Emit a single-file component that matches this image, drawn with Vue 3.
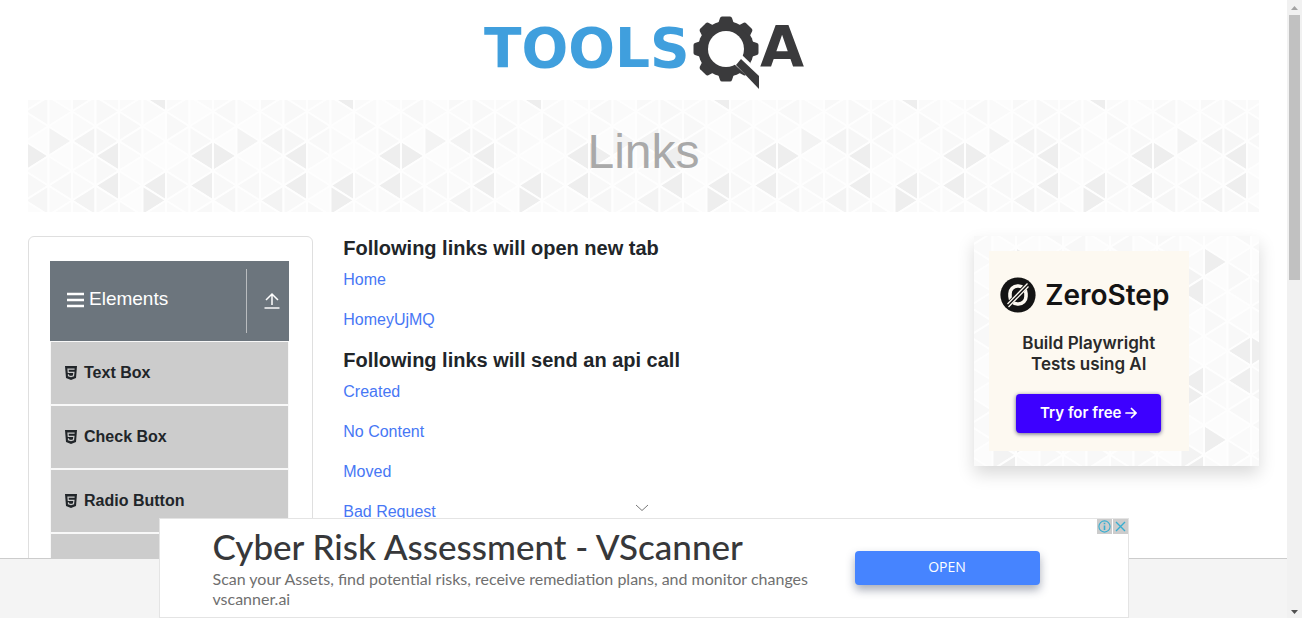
<script setup>
const tabLinks = ['Home', 'HomeyUjMQ']
const apiLinks = ['Created', 'No Content', 'Moved', 'Bad Request']
const menuItems = ['Text Box', 'Check Box', 'Radio Button']
const teeth = [0, 45, 90, 135, 180, 225, 270, 315]

const shades = ['#fcfcfc', '#fafafa', '#f8f8f8', '#f6f6f6', '#f3f3f3', '#eeeeee']
const strips = [
  '011210512302',
  '120104012110',
  '012114111412',
  '021213525210',
  '101122101021',
  '145101015510',
  '501121012110',
  '121012515120'
]
const tileWidth = 188
const tileHeight = 178
const stepX = tileWidth / 8
const stepY = tileHeight / 12
const triangles = []
strips.forEach((strip, c) => {
  for (let j = 0; j <= 12; j++) {
    const pointsRight = (j + c) % 2 === 0
    const base = pointsRight ? c * stepX : (c + 1) * stepX
    const apex = pointsRight ? (c + 1) * stepX : c * stepX
    const y = j * stepY
    triangles.push({
      key: c + '-' + j,
      points: `${base},${y - stepY} ${base},${y + stepY} ${apex},${y}`,
      fill: shades[Number(strip[j % 12])]
    })
  }
})
const patterns = {
  banner: { x: -3, y: -33 },
  promo: { x: 89, y: 26 }
}
</script>

<template>
  <div class="page">
    <div class="view">
      <header class="top">
        <a href="#" class="brand" aria-label="ToolsQA">
          <svg viewBox="-1 0 350 100" width="350" height="100">
            <text class="word blue" x="14" y="67">TOOLS</text>
            <g fill="#3a3a3c">
              <circle cx="256" cy="49" r="28" />
              <path
                v-for="a in teeth"
                :key="a"
                d="M248 24L250 18Q250.500 16.500 252 16.500H260Q261.500 16.500 262 18L264 24Z"
                :transform="`rotate(${a} 256 49)`"
              />
            </g>
            <circle cx="256" cy="49" r="18" fill="#fff" />
            <path d="M263 63L272 55L294 76V92Z" fill="#fff" />
            <path d="M266 65L271 59L289 76V89Z" fill="#3a3a3c" />
            <text class="word dark" x="290" y="67">A</text>
          </svg>
        </a>
      </header>

      <div class="banner">
        <svg class="texture" aria-hidden="true">
          <defs>
            <pattern
              id="banner-tile"
              patternUnits="userSpaceOnUse"
              :x="patterns.banner.x"
              :y="patterns.banner.y"
              :width="tileWidth"
              :height="tileHeight"
            >
              <polygon v-for="t in triangles" :key="t.key" :points="t.points" :fill="t.fill" stroke="#fefefe" stroke-width="2" />
            </pattern>
          </defs>
          <rect width="100%" height="100%" fill="url(#banner-tile)" />
        </svg>
        <h1>Links</h1>
      </div>

      <div class="columns">
        <nav class="menu">
          <button type="button" class="group">
            <span class="group-name">
              <svg viewBox="0 0 17 16" width="17" height="16"><path d="M0 2H17M0 8H17M0 14H17" stroke="#fff" stroke-width="2.6" /></svg>
              Elements
            </span>
            <span class="group-arrow">
              <svg viewBox="0 0 16 18" width="16" height="18" fill="none" stroke="#fff">
                <path d="M8 13V2M2 8L8 2L14 8" stroke-width="1.5" />
                <path d="M0.500 16H15.500" stroke-width="1.800" stroke="#e2e4e6" />
              </svg>
            </span>
          </button>
          <ul>
            <li v-for="item in menuItems" :key="item">
              <a href="#">
                <svg viewBox="0 0 12 14" width="12" height="14">
                  <path d="M0 0H12L11 12L6 14L1 12Z" fill="#212529" />
                  <path d="M9.6 3.2H3L3.3 6.3H8.9L8.5 9.8L6 10.6L3.5 9.8L3.4 8.4" fill="none" stroke="#ccc" stroke-width="1.2" />
                </svg>
                {{ item }}
              </a>
            </li>
            <li class="filler"></li>
          </ul>
        </nav>

        <main class="content">
          <h5>Following links will open new tab</h5>
          <p v-for="l in tabLinks" :key="l"><a href="#">{{ l }}</a></p>
          <h5>Following links will send an api call</h5>
          <p v-for="l in apiLinks" :key="l"><a href="#">{{ l }}</a></p>
        </main>

        <aside class="promo">
          <svg class="texture" aria-hidden="true">
            <defs>
              <pattern
                id="promo-tile"
                patternUnits="userSpaceOnUse"
                :x="patterns.promo.x"
                :y="patterns.promo.y"
                :width="tileWidth"
                :height="tileHeight"
              >
                <polygon v-for="t in triangles" :key="t.key" :points="t.points" :fill="t.fill" stroke="#fefefe" stroke-width="2" />
              </pattern>
            </defs>
            <rect width="100%" height="100%" fill="url(#promo-tile)" />
          </svg>
          <div class="zero">
            <div class="zero-brand">
              <svg viewBox="0 0 36 36" width="36" height="36">
                <circle cx="18" cy="18" r="17.6" fill="#141414" />
                <rect x="10" y="9" width="16" height="18" rx="7.5" fill="none" stroke="#fdf9f1" stroke-width="3.6" />
                <path d="M8 28L28 7" stroke="#141414" stroke-width="5" />
                <path d="M8.5 30L28.5 9.5M7.5 27L27.5 6.5" stroke="#fdf9f1" stroke-width="1.3" />
              </svg>
              <span>ZeroStep</span>
            </div>
            <p>Build Playwright<br />Tests using AI</p>
            <button type="button">
              Try for free
              <svg viewBox="0 0 12 12" width="12" height="12"><path d="M1 6H11M6.5 1.5L11 6L6.5 10.5" fill="none" stroke="#fff" stroke-width="1.7" stroke-linecap="round" /></svg>
            </button>
          </div>
        </aside>
      </div>
    </div>

    <footer class="foot"></footer>

    <section class="ad">
      <button type="button" class="collapse" aria-label="Collapse">
        <svg viewBox="0 0 14 8" width="14" height="8"><path d="M1 1L7 6.5L13 1" fill="none" stroke="#777" stroke-width="1" /></svg>
      </button>
      <div class="ad-copy">
        <h2>Cyber Risk Assessment - VScanner</h2>
        <p>Scan your Assets, find potential risks, receive remediation plans, and monitor changes<br />vscanner.ai</p>
      </div>
      <a href="#" class="open">OPEN</a>
      <div class="ad-tools">
        <button type="button" aria-label="Ad information">
          <svg viewBox="0 0 15 15" width="15" height="15"><circle cx="7.5" cy="7.5" r="5.6" fill="none" stroke="#38aed0" stroke-width="1.1" /><path d="M7.5 6.4V11M7.5 3.8V5.3" stroke="#38aed0" stroke-width="1.6" /></svg>
        </button>
        <button type="button" aria-label="Close ad">
          <svg viewBox="0 0 15 15" width="15" height="15"><path d="M3 3L12 12M12 3L3 12" stroke="#38aed0" stroke-width="1.4" /></svg>
        </button>
      </div>
    </section>

    <div class="scroll" aria-hidden="true">
      <svg viewBox="0 0 15 15" width="15" height="15"><path d="M4 10L7.5 6L11 10Z" fill="#a3a3a3" /></svg>
      <div class="track"><div class="thumb"></div></div>
      <svg viewBox="0 0 15 15" width="15" height="15"><path d="M4 7L7.5 11L11 7Z" fill="#505050" /></svg>
    </div>
  </div>
</template>

<style>
body {
  overflow: hidden;
}
</style>

<style scoped>
* {
  box-sizing: border-box;
}
button {
  border: 0;
  padding: 0;
  background: none;
  font: inherit;
}
svg {
  display: block;
}
.page {
  position: relative;
  display: flex;
  flex-direction: column;
  height: 100vh;
  padding-right: 15px;
  background: #fff;
  color: #212529;
  font: 16px/24px "Liberation Sans", Arial, sans-serif;
}
.view {
  flex: 1;
  min-height: 0;
  overflow: hidden;
  padding: 0 28px;
}
.top {
  display: flex;
  justify-content: center;
}
.word {
  font: bold 55px "DejaVu Sans", sans-serif;
}
.blue {
  fill: #409fdd;
}
.dark {
  fill: #3a3a3c;
  font-size: 57px;
}
.banner {
  position: relative;
  height: 112px;
  padding-top: 23px;
  margin-bottom: 24px;
}
.texture {
  position: absolute;
  inset: 0;
  width: 100%;
  height: 100%;
}
h1 {
  position: relative;
  margin: 0;
  text-align: center;
  font-size: 48px;
  line-height: 58px;
  font-weight: 400;
  color: #a9a9a9;
}
.columns {
  display: grid;
  grid-template-columns: repeat(4, 1fr);
  gap: 30px;
  align-items: start;
}
.menu {
  padding: 24px 23px 24px 21px;
  border: 1px solid #dfdfdf;
  border-radius: 6px;
}
.group {
  display: flex;
  align-items: center;
  justify-content: space-between;
  width: 100%;
  height: 80px;
  padding: 8px 9px 8px 17px;
  background: #6c757d;
  color: #fff;
  font-size: 19px;
}
.group-name {
  display: flex;
  align-items: center;
  gap: 5px;
  padding-bottom: 4px;
}
.group-name svg {
  margin-top: 2px;
}
.group-arrow {
  display: flex;
  align-items: center;
  height: 64px;
  padding-left: 17px;
  border-left: 1px solid #b9bcbf;
}
ul {
  list-style: none;
  margin: 0;
  padding: 0;
}
li {
  border: 1px solid #f8f8f8;
}
li a {
  display: flex;
  align-items: center;
  gap: 7px;
  height: 62px;
  padding-left: 14px;
  background: #ccc;
  color: #212529;
  font-weight: 700;
  text-decoration: none;
}
.filler {
  height: 64px;
  background: #ccc;
}
.content {
  grid-column: span 2;
}
h5 {
  margin: 0 0 8px;
  font-size: 20px;
  line-height: 24px;
}
.content p {
  margin: 0 0 16px;
}
.content a {
  color: #4777f5;
  text-decoration: none;
}
.promo {
  position: relative;
  padding: 15px;
  box-shadow: 0 8px 16px rgba(0, 0, 0, 0.15);
}
.zero {
  position: relative;
  display: flex;
  flex-direction: column;
  align-items: center;
  width: 200px;
  height: 200px;
  padding-top: 26px;
  background: #fdf9f1;
  color: #141414;
  font-family: Inter, sans-serif;
}
.zero-brand {
  display: flex;
  align-items: center;
  gap: 9px;
  padding-right: 8px;
  font-size: 28px;
  line-height: 36px;
  font-weight: 600;
}
.zero p {
  margin: 20px 0 19px;
  text-align: center;
  font-size: 17px;
  line-height: 21px;
  font-weight: 600;
  color: #2a2a2a;
}
.zero button {
  display: flex;
  align-items: center;
  justify-content: center;
  gap: 4px;
  width: 145px;
  height: 39px;
  padding-bottom: 2px;
  border-radius: 4px;
  background: #3d00ff;
  box-shadow: 0 1px 4px rgba(0, 0, 60, 0.6);
  color: #fff;
  font-size: 15px;
  font-weight: 600;
}
.foot {
  height: 60px;
  border-top: 1px solid #ccc;
  background: #f4f4f4;
}
.ad {
  position: absolute;
  left: 0;
  right: 15px;
  bottom: 0;
  display: flex;
  align-items: flex-start;
  justify-content: space-between;
  max-width: 970px;
  height: 100px;
  margin: 0 auto;
  padding: 6px 88px 0 53px;
  border: 1px solid #e4e4e4;
  background: #fff;
  font-family: Lato, sans-serif;
}
.collapse {
  position: absolute;
  top: -15px;
  left: 475px;
}
.ad h2 {
  margin: 0;
  font-size: 35px;
  line-height: 42px;
  font-weight: 500;
  color: #37383a;
}
.ad p {
  margin: 2px 0 0;
  font-size: 16px;
  line-height: 20px;
  color: #6f6f6f;
}
.open {
  width: 185px;
  height: 34px;
  margin-top: 26px;
  border-radius: 4px;
  background: #4684ff;
  box-shadow: 0 5px 10px rgba(40, 50, 80, 0.4);
  color: #fff;
  text-align: center;
  text-decoration: none;
  font: 14px/32px "Open Sans", sans-serif;
}
.ad-tools {
  position: absolute;
  top: 0;
  right: 0;
  display: flex;
  gap: 1px;
}
.ad-tools button {
  background: #ccc;
}
.scroll {
  position: absolute;
  top: 0;
  right: 0;
  bottom: 0;
  display: flex;
  flex-direction: column;
  background: #f1f1f1;
}
.track {
  flex: 1;
  padding: 0 2px;
}
.thumb {
  height: 45%;
  background: #c1c1c1;
}
</style>
